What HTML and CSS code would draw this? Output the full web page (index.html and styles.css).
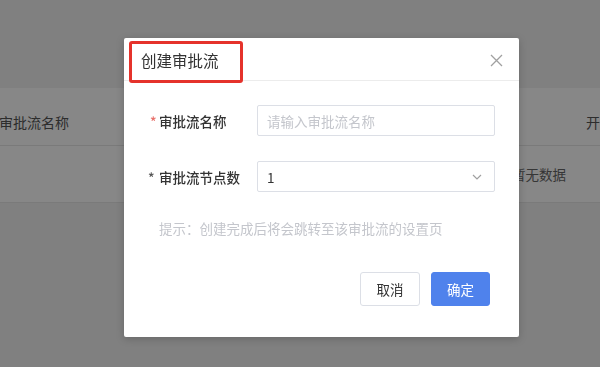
FILE: index.html
```html
<!DOCTYPE html>
<html lang="zh-CN">
<head>
  <meta charset="UTF-8" />
  <meta name="viewport" content="width=device-width, initial-scale=1" />
  <title>审批流管理</title>
  <link rel="stylesheet" href="styles.css">
</head>
<body>
  <div class="page">
    <div class="table">
      <div class="table-head">
        <span class="col-name">审批流名称</span>
        <span class="col-open">开启状态</span>
      </div>
      <div class="table-empty">
        <span>暂无数据</span>
      </div>
    </div>
  </div>

  <div class="mask"></div>

  <div class="dialog">
    <div class="dialog-header">
      <span class="dialog-title">创建审批流</span>
      <span class="highlight-box"></span>
      <button class="dialog-close" aria-label="关闭">
        <svg width="13" height="13" viewBox="0 0 13 13">
          <path d="M1 1 L12 12 M12 1 L1 12" stroke="#a0a0a0" stroke-width="1.3" fill="none" />
        </svg>
      </button>
    </div>

    <div class="dialog-body">
      <div class="form-row">
        <label class="form-label"><span class="star required">*</span>审批流名称</label>
        <input class="form-input" type="text" placeholder="请输入审批流名称" />
      </div>
      <div class="form-row">
        <label class="form-label"><span class="star">*</span>审批流节点数</label>
        <div class="form-select">
          <span>1</span>
          <svg width="10" height="6" viewBox="0 0 10 6">
            <path d="M1 1 L5 5 L9 1" stroke="#a0a0a0" stroke-width="1.2" fill="none" />
          </svg>
        </div>
      </div>
      <p class="form-tip">提示：创建完成后将会跳转至该审批流的设置页</p>
    </div>

    <div class="dialog-footer">
      <button class="btn btn-cancel">取消</button>
      <button class="btn btn-primary">确定</button>
    </div>
  </div>
</body>
</html>
```

FILE: styles.css
```css
body {
  margin: 0;
  font-family: "Noto Sans CJK SC", "Noto Sans", sans-serif;
  background-color: #f1f1f1;
  color: #333;
  overflow: hidden;
}

.page {
  height: 367px;
  padding-top: 88px;
  box-sizing: border-box;
}

.table {
  background-color: #ffffff;
}

.table-head {
  height: 57px;
  display: flex;
  align-items: center;
  justify-content: space-between;
  border-bottom: 1px solid #e6e6e6;
  font-size: 14px;
  color: #555;
  white-space: nowrap;
  overflow: hidden;
}

.col-name {
  margin-left: -1px;
  margin-top: 11px;
}

.col-open {
  margin-right: -42px;
  margin-top: 11px;
}

.table-empty {
  height: 56px;
  display: flex;
  align-items: center;
  padding-left: 512px;
  border-bottom: 1px solid #e6e6e6;
  font-size: 13.5px;
  color: #666;
}

.mask {
  position: fixed;
  inset: 0;
  background-color: rgba(0, 0, 0, 0.47);
}

.dialog {
  position: absolute;
  left: 124px;
  top: 38px;
  width: 395px;
  height: 299px;
  background-color: #ffffff;
  border-radius: 2px;
  box-shadow: 0 2px 8px rgba(0, 0, 0, 0.2);
}

.dialog-header {
  position: relative;
  height: 42px;
  display: flex;
  align-items: center;
  justify-content: space-between;
  padding: 0 17px;
  border-bottom: 1px solid #ececec;
}

.dialog-title {
  font-size: 15.5px;
  color: #333;
  margin-top: 1px;
}

.highlight-box {
  position: absolute;
  left: 5px;
  top: 3px;
  width: 108px;
  height: 36px;
  border: 3px solid #e5322b;
  border-radius: 3px;
}

.dialog-close {
  background: none;
  border: none;
  padding: 0;
  margin-right: -1px;
  margin-top: 3px;
  display: flex;
  cursor: pointer;
}

.dialog-body {
  padding: 24px 24px 0;
}

.form-row {
  display: flex;
  align-items: center;
  margin-bottom: 25px;
}

.form-label {
  width: 109px;
  font-size: 13.5px;
  color: #333;
  font-weight: 500;
  white-space: nowrap;
}

.star {
  display: inline-block;
  width: 11px;
  color: #555;
}

.star.required {
  color: #e8706a;
  margin-left: 2px;
  width: 9px;
}

.form-input,
.form-select {
  flex: 1;
  height: 31px;
  box-sizing: border-box;
  border: 1px solid #dcdfe6;
  border-radius: 2px;
  padding: 0 9px;
  font-family: inherit;
  font-size: 13.5px;
  color: #333;
  outline: none;
}

.form-input::placeholder {
  color: #c4c6cc;
}

.form-select {
  display: flex;
  align-items: center;
  justify-content: space-between;
  padding-right: 12px;
}

.form-tip {
  margin: 0;
  padding: 1px 0 0 11px;
  font-size: 13.5px;
  color: #c4c6cc;
}

.dialog-footer {
  display: flex;
  justify-content: flex-end;
  gap: 11px;
  padding: 34px 29px 0;
}

.btn {
  width: 60px;
  height: 34px;
  font-family: inherit;
  font-size: 13.5px;
  border-radius: 3px;
  cursor: pointer;
}

.btn-cancel {
  background-color: #ffffff;
  border: 1px solid #dcdfe6;
  color: #333;
}

.btn-primary {
  width: 59px;
  background-color: #4f82ec;
  border: 1px solid #4f82ec;
  color: #ffffff;
}
```
